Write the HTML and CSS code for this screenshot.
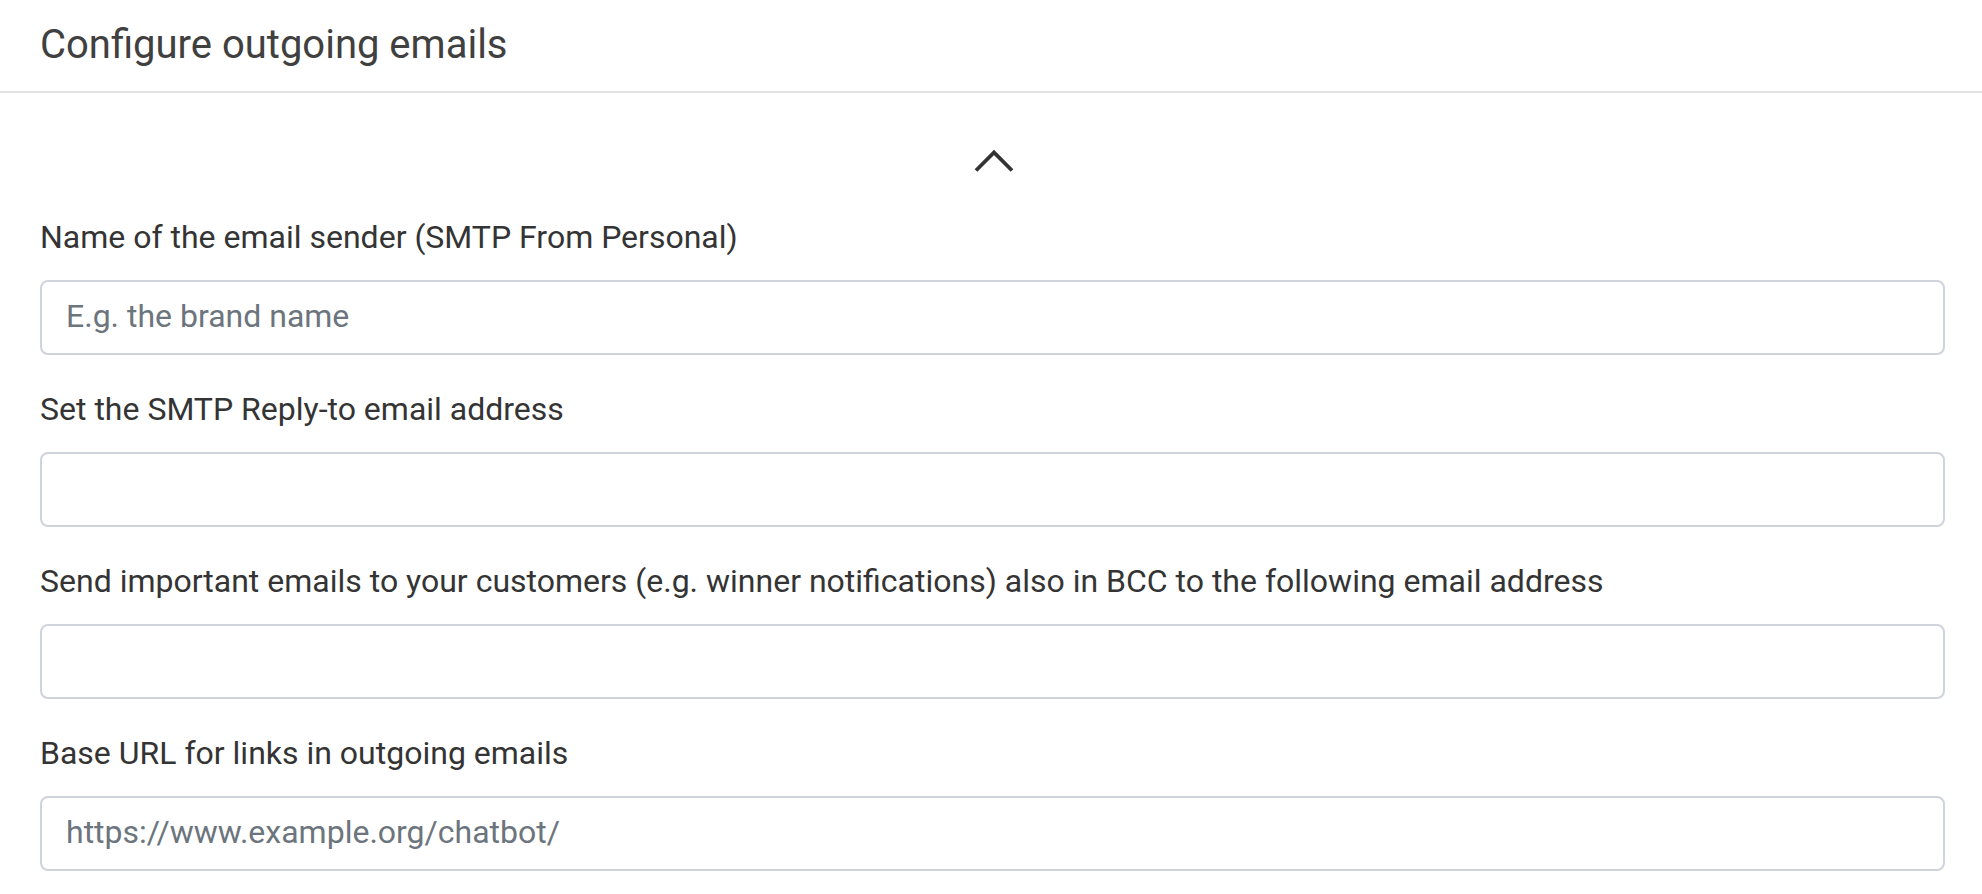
FILE: index.html
```html
<!DOCTYPE html>
<html>
<head>
<meta charset="utf-8">
<link rel="stylesheet" href="styles.css">
</head>
<body>
<div class="header">
  <h1 class="title">Configure outgoing emails</h1>
</div>
<div class="content">
  <div class="toggle">
    <svg class="chevron" width="40" height="24" viewBox="0 0 40 24"><polyline points="2,21.5 20,3.5 38,21.5" fill="none" stroke="#333" stroke-width="3.8"/></svg>
  </div>
  <div class="group">
    <label class="label">Name of the email sender (SMTP From Personal)</label>
    <input class="field" type="text" placeholder="E.g. the brand name">
  </div>
  <div class="group">
    <label class="label">Set the SMTP Reply-to email address</label>
    <input class="field" type="text">
  </div>
  <div class="group">
    <label class="label">Send important emails to your customers (e.g. winner notifications) also in BCC to the following email address</label>
    <input class="field" type="text">
  </div>
  <div class="group">
    <label class="label">Base URL for links in outgoing emails</label>
    <input class="field" type="text" placeholder="https://www.example.org/chatbot/">
  </div>
</div>
</body>
</html>
```
FILE: styles.css
```css
html, body {
  margin: 0;
  padding: 0;
  background: #fff;
  font-family: Roboto, "Liberation Sans", sans-serif;
  overflow: hidden;
}
.header {
  height: 91px;
  border-bottom: 2px solid #e2e2e2;
  padding: 0 40px;
  display: flex;
  align-items: center;
}
.title {
  margin: 0;
  font-size: 40px;
  font-weight: 400;
  color: #404040;
  line-height: 48px;
  padding-bottom: 2px;
}
.content {
  padding: 0 37px 0 40px;
}
.toggle {
  display: flex;
  justify-content: center;
  padding: 56px 0 40px;
  padding-left: 2px;
}
.chevron {
  display: block;
}
.group {
  display: flex;
  flex-direction: column;
  margin-bottom: 30px;
}
.label {
  font-size: 32px;
  line-height: 48px;
  color: #343434;
  margin-bottom: 19px;
}
.field {
  box-sizing: border-box;
  height: 75px;
  width: 100%;
  border: 2px solid #cfd3da;
  border-radius: 8px;
  padding: 0 24px 4px;
  font-family: Roboto, "Liberation Sans", sans-serif;
  font-size: 32px;
  color: #495057;
  background: #fff;
  outline: none;
}
.field::placeholder {
  color: #6c757d;
  opacity: 1;
}
```
